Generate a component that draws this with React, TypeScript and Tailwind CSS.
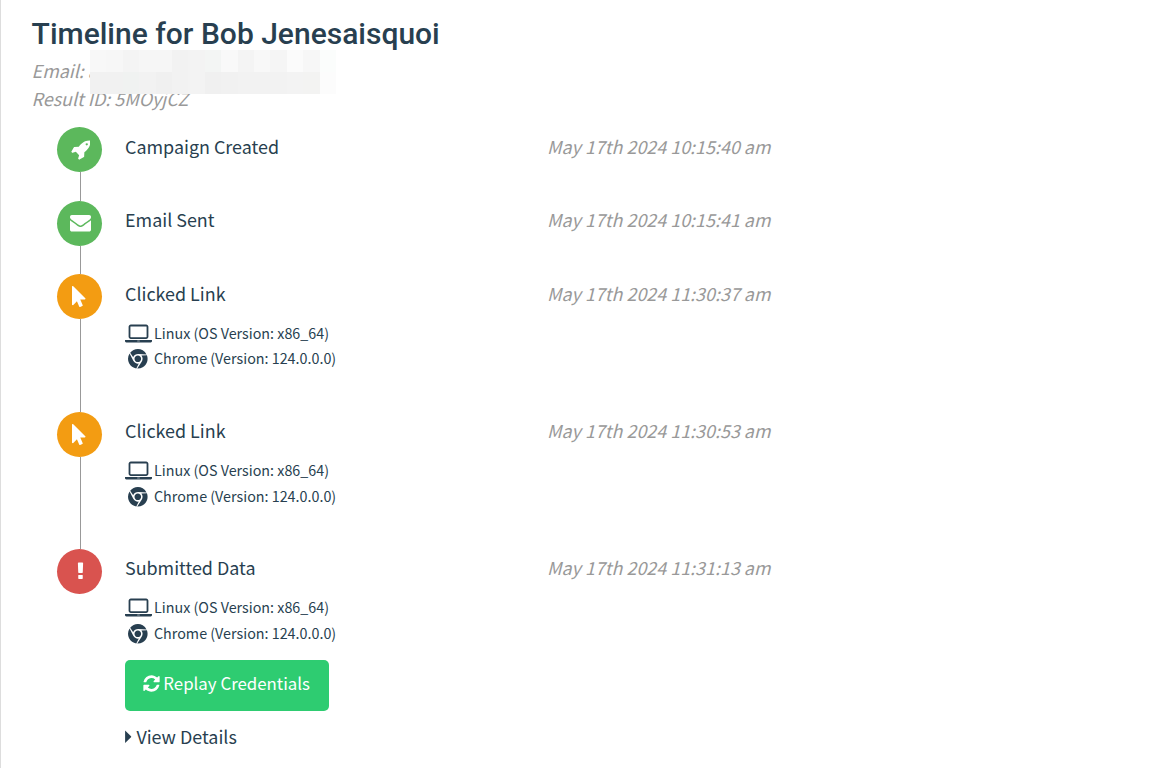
import type { ReactNode } from "react";

const glyphs = {
  rocket:
    "M1440 448q0-40-28-68t-68-28-68 28-28 68 28 68 68 28 68-28 28-68zm224-288q0 249-75.5 430.5t-253.5 360.5q-81 80-195 176l-20 379q-2 16-16 26l-384 224q-7 4-16 4-12 0-23-9l-64-64q-13-14-8-32l85-276-281-281-276 85q-3 1-9 1-14 0-23-9l-64-64q-17-19-5-39l224-384q10-14 26-16l379-20q96-114 176-195 188-187 358-258t431-71q14 0 24 9.5t10 22.5z",
  envelope:
    "M1792 710v794q0 66-47 113t-113 47h-1472q-66 0-113-47t-47-113v-794q44 49 101 87 362 246 497 345 57 42 92.5 65.5t94.5 48 110 24.5h2q51 0 110-24.5t94.5-48 92.5-65.5q170-123 498-345 57-39 100-87zm0-294q0 79-49 151t-122 123q-376 261-468 325-10 7-42.5 31t-54 38.5-52 32.5-57.5 27-50 9h-2q-23 0-50-9t-57.5-27-52-32.5-54-38.5-42.5-31q-91-64-262-182.5t-205-142.5q-62-42-117-115.5t-55-136.5q0-78 41.5-130t118.5-52h1472q65 0 112.5 47t47.5 113z",
  pointer:
    "M1389 1043q31 30 14 69-17 40-59 40h-382l201 476q10 25 0 49t-34 35l-177 75q-25 10-49 0t-35-34l-191-452-312 312q-19 19-45 19-12 0-24-5-40-17-40-59v-1504q0-42 40-59 12-5 24-5 27 0 45 19z",
  exclamation:
    "M1088 1248v224q0 26-19 45t-45 19h-256q-26 0-45-19t-19-45v-224q0-26 19-45t45-19h256q26 0 45 19t19 45zm30-1056l-28 768q-1 26-20.5 45t-45.5 19h-256q-26 0-45.5-19t-20.5-45l-28-768q-1-26 17.5-45t44.5-19h320q26 0 44.5 19t17.5 45z",
  laptop:
    "M416 1280q-66 0-113-47t-47-113v-704q0-66 47-113t113-47h1088q66 0 113 47t47 113v704q0 66-47 113t-113 47h-1088zm-32-864v704q0 13 9.5 22.5t22.5 9.5h1088q13 0 22.5-9.5t9.5-22.5v-704q0-13-9.5-22.5t-22.5-9.5h-1088q-13 0-22.5 9.5t-9.5 22.5zm1376 928h160v96q0 40-47 68t-113 28h-1600q-66 0-113-28t-47-68v-96h1760zm-720 96q16 0 16-16t-16-16h-160q-16 0-16 16t16 16h160z",
  chrome:
    "M893 0q240-2 451 120 232 134 352 372l-742-39q-160-9-294 74.5t-185 229.5l-276-424q128-159 311-245.5t383-87.5zm-747 405l337 663q72 143 211 217t293 45l-230 451q-212-33-385-157.5t-272.5-316-99.5-411.5q0-267 146-491zm1586 169q58 150 59.5 310.5t-48.5 306-153 272-246 209.5q-230 133-498 119l405-623q88-131 82.5-290.5t-106.5-277.5zm-836 20q125 0 213.5 88.5t88.5 213.5-88.5 213.5-213.5 88.5-213.5-88.5-88.5-213.5 88.5-213.5 213.5-88.5z",
  refresh:
    "M1639 1056q0 5-1 7-64 268-268 434.5t-478 166.5q-146 0-282.5-55t-243.5-157l-129 129q-19 19-45 19t-45-19-19-45v-448q0-26 19-45t45-19h448q26 0 45 19t19 45-19 45l-137 137q71 66 161 102t187 36q134 0 250-65t186-179q11-17 53-117 8-23 30-23h192q13 0 22.5 9.5t9.5 22.5zm25-800v448q0 26-19 45t-45 19h-448q-26 0-45-19t-19-45 19-45l138-138q-148-137-349-137-134 0-250 65t-186 179q-11 17-53 117-8 23-30 23h-199q-13 0-22.5-9.5t-9.5-22.5v-7q65-268 270-434.5t480-166.5q146 0 284 55.5t245 156.5l130-129q19-19 45-19t45 19 19 45z",
  caret: "M0 320l557 557q19 19 19 45t-19 45L0 1498z",
};

function Glyph({ name, width = 1792, className }: { name: keyof typeof glyphs; width?: number; className: string }) {
  return (
    <svg viewBox={`0 0 ${width} 1792`} fill="currentColor" fillRule="evenodd" className={className}>
      <path d={glyphs[name]} />
    </svg>
  );
}

function Device({ chromeRow = "h-[27px] pt-[1px]" }: { chromeRow?: string }) {
  return (
    <div className="mt-[14px] text-[14.32px] leading-[20px]">
      <div className="flex h-[25px] items-center">
        <Glyph name="laptop" width={1920} className="mt-[2px] h-[25.2px] w-[27px] shrink-0" />
        <span className="ml-[2px]">Linux (OS Version: x86_64)</span>
      </div>
      <div className={`flex items-center ${chromeRow}`}>
        <Glyph name="chrome" className="mt-[2px] ml-[3px] size-[19.6px] shrink-0" />
        <span className="ml-[6.4px]">Chrome (Version: 124.0.0.0)</span>
      </div>
    </div>
  );
}

type EventProps = {
  icon: ReactNode;
  color: string;
  height: string;
  offset: string;
  title: string;
  time: string;
  last?: boolean;
  children?: ReactNode;
};

function TimelineEvent({ icon, color, height, offset, title, time, last, children }: EventProps) {
  return (
    <li className={`flex ${height}`}>
      <div className="flex w-[45px] shrink-0 flex-col items-center">
        <div className={`flex size-[45px] shrink-0 items-center justify-center rounded-full text-white ${color}`}>
          {icon}
        </div>
        {!last && <div className="ml-px w-px flex-1 bg-[#999999]" />}
      </div>
      <div className={`ml-[23px] w-[422px] shrink-0 ${offset}`}>
        <div className="leading-[26px]">{title}</div>
        {children}
      </div>
      <div className={`leading-[26px] whitespace-nowrap text-[#999999] italic ${offset}`}>{time}</div>
    </li>
  );
}

const maskRows = [
  ["bg-[#f8f8f8]", "bg-[#f7f7f7]", "bg-[#f4f4f4]", "bg-[#f6f6f6]", "bg-[#f6f6f6]", "bg-[#f2f2f2]", "bg-[#f3f3f3]", "bg-[#f3f5f4]", "bg-[#f9f9f9]", "bg-[#f4f4f4]", "bg-[#f8f8f8]", "bg-[#f5f5f5]", "bg-[#fbfbfb]", "bg-[#f7f7f7]", "bg-[#fbfdfc]"],
  ["bg-[#f1f1f1]", "bg-[#f1f1f1]", "bg-[#f0f2f1]", "bg-[#f2f2f2]", "bg-[#f0f0f0]", "bg-[#f2f2f2]", "bg-[#f3f3f3]", "bg-[#f0f0f0]", "bg-[#f1f1f1]", "bg-[#f2f2f2]", "bg-[#f2f2f2]", "bg-[#f2f2f2]", "bg-[#f3f3f3]", "bg-[#f3f3f2]", "bg-[#fcfcfc]"],
];

export default function App() {
  return (
    <main className="h-[768px] overflow-hidden border-l border-[#dddddd] bg-white pl-[30px] font-['Noto_Sans_CJK_SC',sans-serif] text-[17.92px] text-[#283f50]">
      <h1 className="pt-[16px] pl-[0.6px] font-['Roboto',sans-serif] text-[30px] leading-[36px] font-medium">
        Timeline for Bob Jenesaisquoi
      </h1>
      <div className="relative mt-[4px] pl-[0.6px] text-[#999999] italic">
        <p className="leading-[28px]">Email: a</p>
        <p className="leading-[28px]">Result ID: 5MOyjCZ</p>
        <div className="absolute top-[-6px] left-[59px] w-[246px]">
          {maskRows.map((row, i) => (
            <div key={i} className="flex h-[22px]">
              {row.map((tone, j) => (
                <div key={j} className={`flex-1 ${tone}`} />
              ))}
            </div>
          ))}
        </div>
      </div>
      <ul className="mt-[15px] ml-[26px]">
        <TimelineEvent
          icon={<Glyph name="rocket" width={1664} className="ml-[2px] h-[21px] w-[19.5px]" />}
          color="bg-[#5cb85c]"
          height="h-[74px]"
          offset="mt-[6px]"
          title="Campaign Created"
          time="May 17th 2024 10:15:40 am"
        />
        <TimelineEvent
          icon={<Glyph name="envelope" className="mb-[1.5px] ml-[1px] size-[21px]" />}
          color="bg-[#5cb85c]"
          height="h-[73px]"
          offset="mt-[5px]"
          title="Email Sent"
          time="May 17th 2024 10:15:41 am"
        />
        <TimelineEvent
          icon={<Glyph name="pointer" className="mr-[1px] size-[21px]" />}
          color="bg-[#f39c12]"
          height="h-[138px]"
          offset="mt-[6px]"
          title="Clicked Link"
          time="May 17th 2024 11:30:37 am"
        >
          <Device chromeRow="h-[26px]" />
        </TimelineEvent>
        <TimelineEvent
          icon={<Glyph name="pointer" className="mr-[1px] mb-[1px] size-[21px]" />}
          color="bg-[#f39c12]"
          height="h-[137px]"
          offset="mt-[5px]"
          title="Clicked Link"
          time="May 17th 2024 11:30:53 am"
        >
          <Device />
        </TimelineEvent>
        <TimelineEvent
          icon={<Glyph name="exclamation" className="mb-[1px] ml-[1px] size-[21px]" />}
          color="bg-[#d9534f]"
          height="h-[219px]"
          offset="mt-[5px]"
          title="Submitted Data"
          time="May 17th 2024 11:31:13 am"
          last
        >
          <Device />
          <button className="mt-[14px] flex h-[51px] w-[204px] items-center rounded-[5px] bg-[#2ecc71] pl-[17.3px] text-[16.85px] whitespace-nowrap text-white">
            <Glyph name="refresh" className="mb-[4px] size-[19px] shrink-0" />
            <span className="mt-[-6px] ml-[2px]">Replay Credentials</span>
          </button>
          <div className="mt-[12px] flex h-[26px] items-center leading-[26px]">
            <Glyph name="caret" width={640} className="h-[19px] w-[7px]" />
            <span className="ml-[4.4px]">View Details</span>
          </div>
        </TimelineEvent>
      </ul>
    </main>
  );
}
